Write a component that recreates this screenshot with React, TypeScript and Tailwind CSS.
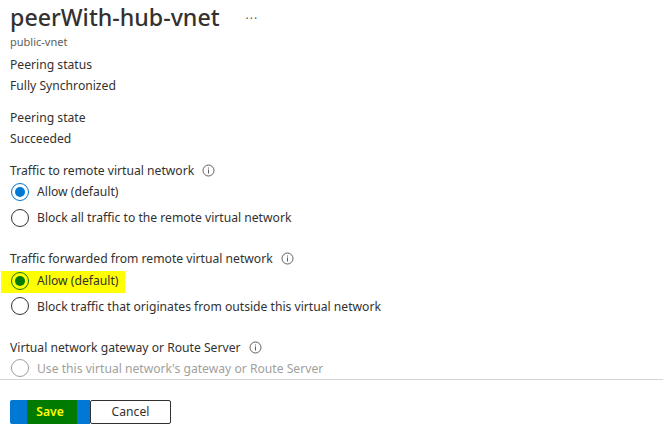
import React from 'react'

function InfoIcon() {
  return (
    <svg width="13" height="13" viewBox="0 0 13 13" fill="none" className="ml-2 shrink-0">
      <circle cx="6.5" cy="6.5" r="5.5" stroke="#605e5c" strokeWidth="1" />
      <rect x="6" y="5.5" width="1" height="4" fill="#605e5c" />
      <rect x="6" y="3.5" width="1" height="1" fill="#605e5c" />
    </svg>
  )
}

function Radio({ checked, disabled }: { checked?: boolean; disabled?: boolean }) {
  if (checked) {
    return (
      <span className="flex h-[18px] w-[18px] shrink-0 items-center justify-center rounded-full border border-[#0078d4]">
        <span className="h-[10px] w-[10px] rounded-full bg-[#0078d4]" />
      </span>
    )
  }
  return (
    <span
      className={`h-[18px] w-[18px] shrink-0 rounded-full border ${disabled ? 'border-[#a19f9d]' : 'border-[#323130]'}`}
    />
  )
}

function Option({ label, checked, disabled, flush }: { label: string; checked?: boolean; disabled?: boolean; flush?: boolean }) {
  return (
    <div className={`flex h-[26px] items-center gap-[8px] pl-px ${disabled ? 'text-[#a19f9d]' : ''}`}>
      <Radio checked={checked} disabled={disabled} />
      <span className={flush ? '' : 'pt-[2px]'}>{label}</span>
    </div>
  )
}

function Label({ text }: { text: string }) {
  return (
    <div className="flex h-[21px] items-center">
      <span className="pt-[2px]">{text}</span>
      <InfoIcon />
    </div>
  )
}

function Row({ text, className = '' }: { text: string; className?: string }) {
  return <div className={`flex h-[21px] items-center pt-[2px] ${className}`}>{text}</div>
}

export default function App() {
  return (
    <div className="flex h-[429px] w-[663px] flex-col overflow-hidden bg-white font-['Noto_Sans','Open_Sans',sans-serif] text-[12.15px] text-[#323130]">
      <div className="h-[379px] overflow-hidden pl-[10px]">
        {/* Header */}
        <div className="flex h-[34px] items-center">
          <h1 className="text-[23.2px] leading-[34px] font-medium text-[#323130]">peerWith-hub-vnet</h1>
          <span className="mt-[4px] ml-[26px] text-[12px] tracking-[1px] text-[#605e5c]">···</span>
        </div>
        <div className="flex h-[16px] items-center text-[11px] text-[#605e5c]">public-vnet</div>

        <Row text="Peering status" className="mt-[4px]" />
        <Row text="Fully Synchronized" />

        <Row text="Peering state" className="mt-[11px]" />
        <Row text="Succeeded" />

        <div className="mt-[11px]">
          <Label text="Traffic to remote virtual network" />
          <div className="-mt-[2px]">
            <Option label="Allow (default)" checked flush />
            <Option label="Block all traffic to the remote virtual network" flush />
          </div>
        </div>

        <div className="mt-[17px]">
          <Label text="Traffic forwarded from remote virtual network" />
          <div className="mt-[2px] ml-[-9px] flex h-[22px] w-[124px] items-center gap-[8px] bg-[#ffff00] pb-[3px] pl-[10px]">
            <span className="flex h-[18px] w-[18px] shrink-0 items-center justify-center rounded-full border border-[#107c10]">
              <span className="h-[10px] w-[10px] rounded-full bg-[#007a00]" />
            </span>
            <span className="pt-[2px]">Allow (default)</span>
          </div>
          <Option label="Block traffic that originates from outside this virtual network" />
        </div>

        <div className="mt-[18px]">
          <Label text="Virtual network gateway or Route Server" />
          <div className="-mt-[3px]">
            <Option label="Use this virtual network's gateway or Route Server" disabled />
          </div>
        </div>
      </div>

      {/* Footer */}
      <div className="flex flex-1 items-start border-t border-[#d6d6d6] pt-[20px] pl-[10px]">
        <button className="flex h-[24px] w-[80px] items-center rounded-l-[2px] bg-[#0078d4] pl-[17px]">
          <span className="flex h-[24px] w-[50px] items-center justify-center bg-[#007a00] pr-[4px] font-semibold text-[#ffff00]">Save</span>
        </button>
        <button className="h-[24px] w-[81px] rounded-[2px] border border-[#323130] bg-white">Cancel</button>
      </div>
    </div>
  )
}
